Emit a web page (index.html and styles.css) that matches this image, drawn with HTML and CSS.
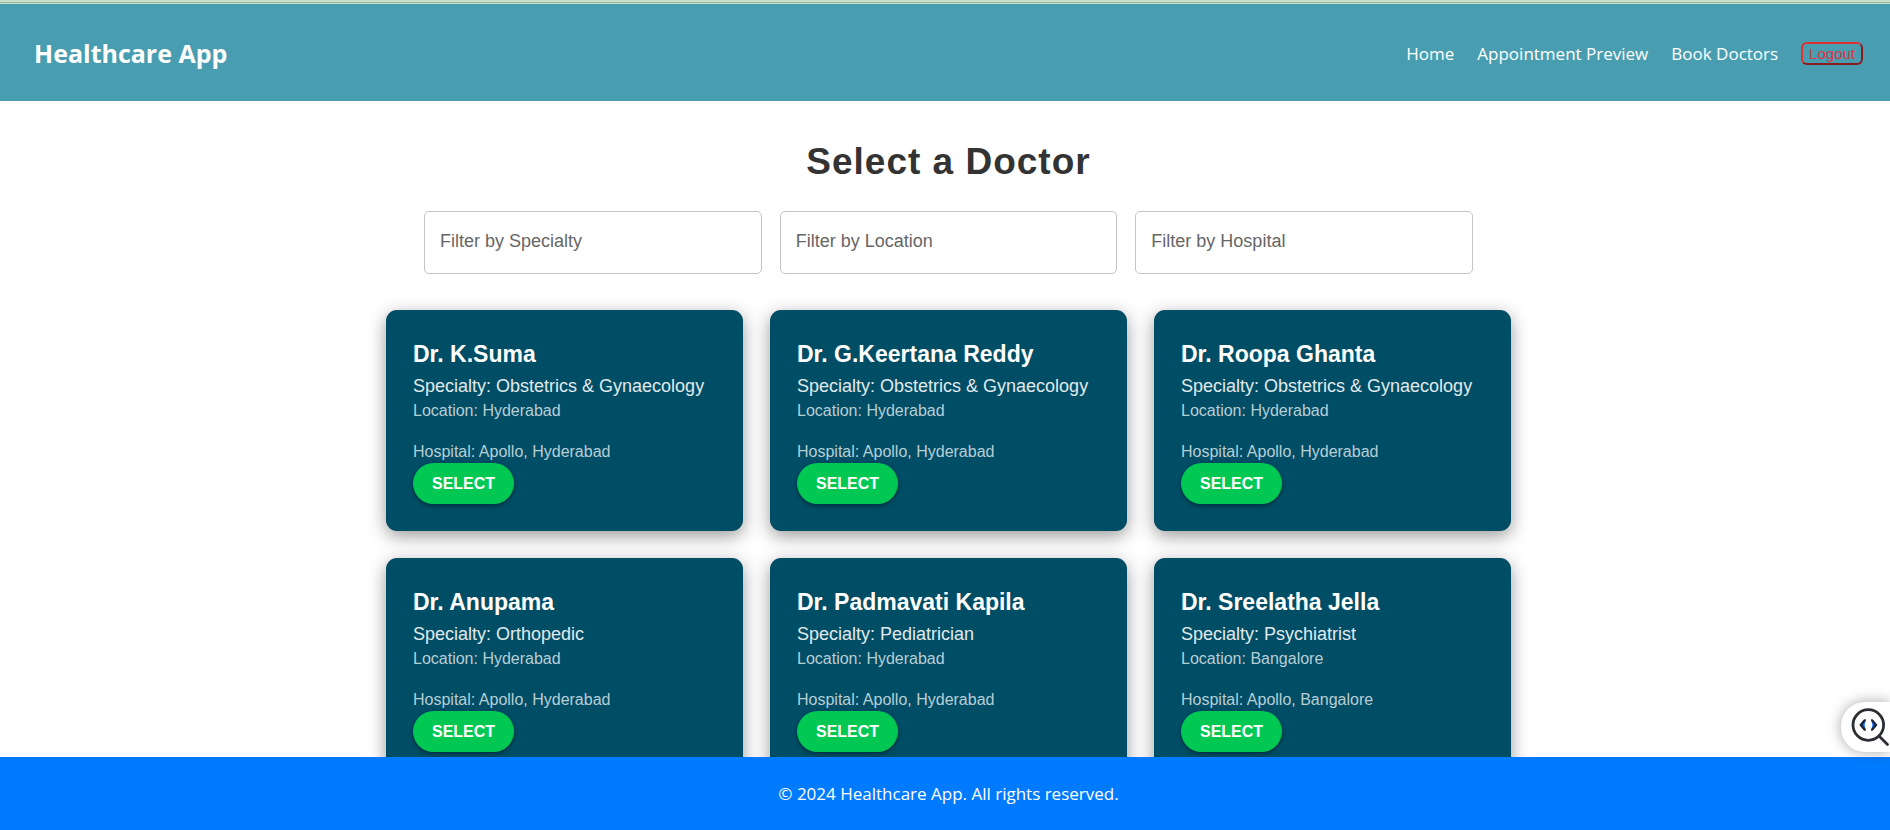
FILE: index.html
```html
<!DOCTYPE html>
<html lang="en">
<head>
<meta charset="utf-8">
<title>Healthcare App</title>
<link rel="stylesheet" href="styles.css">
</head>
<body>
<div class="top-strip"></div>
<header class="header">
  <h2 class="brand">Healthcare App</h2>
  <nav class="nav">
    <a href="#">Home</a>
    <a href="#">Appointment Preview</a>
    <a href="#">Book Doctors</a>
    <button class="logout" type="button">Logout</button>
  </nav>
</header>
<main class="content">
  <h1 class="title">Select a Doctor</h1>
  <form class="filters">
    <input type="text" placeholder="Filter by Specialty" aria-label="Filter by Specialty">
    <input type="text" placeholder="Filter by Location" aria-label="Filter by Location">
    <input type="text" placeholder="Filter by Hospital" aria-label="Filter by Hospital">
  </form>
  <section class="cards">
    <article class="card">
      <h3 class="name">Dr. K.Suma</h3>
      <p class="specialty">Specialty: Obstetrics &amp; Gynaecology</p>
      <p class="detail">Location: Hyderabad</p>
      <p class="detail hospital">Hospital: Apollo, Hyderabad</p>
      <button class="select" type="button">SELECT</button>
    </article>
    <article class="card">
      <h3 class="name">Dr. G.Keertana Reddy</h3>
      <p class="specialty">Specialty: Obstetrics &amp; Gynaecology</p>
      <p class="detail">Location: Hyderabad</p>
      <p class="detail hospital">Hospital: Apollo, Hyderabad</p>
      <button class="select" type="button">SELECT</button>
    </article>
    <article class="card">
      <h3 class="name">Dr. Roopa Ghanta</h3>
      <p class="specialty">Specialty: Obstetrics &amp; Gynaecology</p>
      <p class="detail">Location: Hyderabad</p>
      <p class="detail hospital">Hospital: Apollo, Hyderabad</p>
      <button class="select" type="button">SELECT</button>
    </article>
    <article class="card">
      <h3 class="name">Dr. Anupama</h3>
      <p class="specialty">Specialty: Orthopedic</p>
      <p class="detail">Location: Hyderabad</p>
      <p class="detail hospital">Hospital: Apollo, Hyderabad</p>
      <button class="select" type="button">SELECT</button>
    </article>
    <article class="card">
      <h3 class="name">Dr. Padmavati Kapila</h3>
      <p class="specialty">Specialty: Pediatrician</p>
      <p class="detail">Location: Hyderabad</p>
      <p class="detail hospital">Hospital: Apollo, Hyderabad</p>
      <button class="select" type="button">SELECT</button>
    </article>
    <article class="card">
      <h3 class="name">Dr. Sreelatha Jella</h3>
      <p class="specialty">Specialty: Psychiatrist</p>
      <p class="detail">Location: Bangalore</p>
      <p class="detail hospital">Hospital: Apollo, Bangalore</p>
      <button class="select" type="button">SELECT</button>
    </article>
  </section>
</main>
<button class="inspect" type="button" aria-label="Inspect code">
  <svg width="40" height="42" viewBox="0 0 40 42" fill="none">
    <circle cx="18.300" cy="19" r="15.300" stroke="#2b2e33" stroke-width="2.800"/>
    <path d="M29 30l8.500 8.500" stroke="#2b2e33" stroke-width="2.800" stroke-linecap="round"/>
    <path d="M15.500 13.500L11 19l4.500 5.500-1.500-5.500z" fill="#1768ff" stroke="#1768ff" stroke-width="1"/>
    <path d="M21.500 13.500L26 19l-4.500 5.500 1.500-5.500z" fill="#1768ff" stroke="#1768ff" stroke-width="1"/>
    <path d="M14.500 14.500L10.800 19l3.700 4.500M22.300 14.500L26 19l-3.700 4.500" stroke="#1c2230" stroke-width="2.300" stroke-linecap="round"/>
  </svg>
</button>
<footer class="footer">© 2024 Healthcare App. All rights reserved.</footer>
</body>
</html>
```
FILE: styles.css
```css
* {
  box-sizing: border-box;
}

body {
  margin: 0;
  height: 100vh;
  display: flex;
  flex-direction: column;
  overflow: hidden;
  background: #fff;
  font-family: "Liberation Sans", Arial, sans-serif;
}

h1, h2, h3, p {
  margin: 0;
}

.top-strip {
  flex: none;
  height: 4px;
  background: linear-gradient(#c8e2cb 2px, #9fb19f 2px 3px, #c8e2cb 3px);
}

.header {
  flex: none;
  display: flex;
  align-items: center;
  justify-content: space-between;
  padding: 31px 27px 29px 34px;
  background: #489eb0;
  color: #fff;
  font-family: "Segoe UI", "Open Sans", sans-serif;
}

.brand {
  font-size: 25px;
  line-height: 37px;
  font-weight: 700;
}

.nav {
  display: flex;
  align-items: center;
  gap: 23px;
  font-size: 17px;
}

.nav a {
  color: #fff;
  text-decoration: none;
}

.logout {
  height: 23px;
  padding: 0 6px;
  border: 2px solid;
  border-color: #e03131 #8c1c1c #8c1c1c #e03131;
  border-radius: 6px;
  background: none;
  color: #dc3545;
  font-family: "Liberation Sans", Arial, sans-serif;
  font-size: 15px;
}

.content {
  flex: 1;
  min-height: 0;
  overflow: hidden;
  padding: 37px 0 0 7px;
}

.title {
  color: #333;
  font-size: 37px;
  line-height: 48px;
  letter-spacing: 1px;
  text-align: center;
}

.filters {
  display: flex;
  gap: 18px;
  max-width: 1049px;
  margin: 25px auto 36px;
}

.filters input {
  flex: 1;
  min-width: 0;
  height: 63px;
  padding: 0 15px 2px;
  border: 1px solid #c4c4c4;
  border-radius: 5px;
  background: #fff;
  color: #333;
  font-family: inherit;
  font-size: 18px;
}

.filters input::placeholder {
  color: #666;
  opacity: 1;
}

.cards {
  display: grid;
  grid-template-columns: repeat(3, 1fr);
  gap: 27px;
  max-width: 1125px;
  margin: 0 auto;
}

.card {
  padding: 27px;
  border-radius: 11px;
  background: #004d66;
  box-shadow: 0 5px 18px rgba(0, 0, 0, 0.4);
}

.name {
  color: #fff;
  font-size: 23px;
  line-height: 34px;
}

.specialty {
  padding-top: 1px;
  color: #e0eaed;
  font-size: 18px;
  line-height: 28px;
}

.detail {
  color: #b9cdd4;
  font-size: 16px;
  line-height: 22px;
}

.hospital {
  margin-top: 19px;
}

.select {
  display: block;
  height: 41px;
  padding: 0 19px;
  border: 0;
  border-radius: 21px;
  background: #00c853;
  box-shadow: 0 2px 4px rgba(0, 0, 0, 0.4);
  color: #fff;
  font-family: inherit;
  font-size: 16px;
  font-weight: 700;
}

.footer {
  flex: none;
  padding: 24px 0 24px 7px;
  background: #007bff;
  color: #fff;
  font-family: "Segoe UI", "Open Sans", sans-serif;
  font-size: 17px;
  line-height: 25px;
  text-align: center;
}

.inspect {
  position: fixed;
  right: 0;
  bottom: 78px;
  display: flex;
  height: 50px;
  padding: 4px 0 4px 9px;
  border: 0;
  border-radius: 24px 0 0 24px;
  background: #fff;
  box-shadow: 0 0 14px rgba(0, 0, 0, 0.35);
}
```
